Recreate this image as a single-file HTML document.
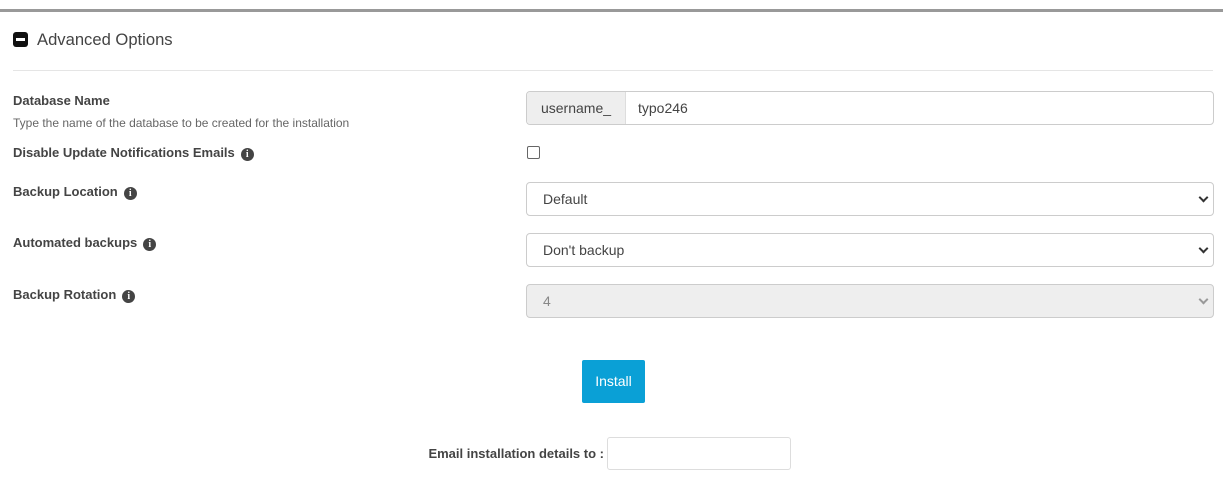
<!DOCTYPE html><html><head><style>
body{margin:0;width:1223px;height:495px;background:#fff;font-family:"Liberation Sans",sans-serif;color:#444;position:relative;overflow:hidden}
.a{position:absolute}
.bar{left:0;top:9px;width:1223px;height:3px;background:#999}
.lbl{font-size:13px;font-weight:bold;color:#444;left:13px}
.i{display:inline-block;width:13px;height:13px;border-radius:50%;background:#444;color:#fff;font-size:10px;font-weight:bold;text-align:center;line-height:13px;font-family:"Liberation Serif",serif;margin-left:6px;vertical-align:0px}
.box{left:526px;width:686px;height:32px;border:1px solid #ccc;border-radius:4px;font-size:14px;line-height:32px;color:#444}
.box span{margin-left:16px}
.chev{position:absolute;right:6px;top:11px;width:5px;height:5px;border-right:2px solid #333;border-bottom:2px solid #333;transform:rotate(45deg)}
</style></head><body>
<div class="a bar"></div>
<div class="a" style="left:13px;top:32px;width:15px;height:15px;background:#111;border-radius:3px"><div style="position:absolute;left:3px;top:6px;width:9px;height:3px;background:#fff"></div></div>
<div class="a" style="left:37px;top:30px;font-size:16.6px;color:#444">Advanced Options</div>
<div class="a" style="left:13px;top:70px;width:1200px;height:1px;background:#e5e5e5"></div>
<div class="a lbl" style="top:93px">Database Name</div>
<div class="a" style="left:13px;top:116px;font-size:12px;color:#666">Type the name of the database to be created for the installation</div>
<div class="a lbl" style="top:145px">Disable Update Notifications Emails<span class="i">i</span></div>
<div class="a lbl" style="top:184px">Backup Location<span class="i">i</span></div>
<div class="a lbl" style="top:235px">Automated backups<span class="i">i</span></div>
<div class="a lbl" style="top:287px">Backup Rotation<span class="i">i</span></div>
<div class="a box" style="top:91px"><div style="position:absolute;left:0;top:0;width:98px;height:32px;background:#eee;border-right:1px solid #ddd;border-radius:4px 0 0 4px;text-align:center">username_</div><span style="position:absolute;left:95px">typo246</span></div>
<div class="a" style="left:527px;top:146px;width:11px;height:11px;border:1px solid #666;border-radius:2px"></div>
<div class="a box" style="top:182px"><span>Default</span><div class="chev"></div></div>
<div class="a box" style="top:233px"><span>Don't backup</span><div class="chev"></div></div>
<div class="a box" style="top:284px;background:#eee;color:#888"><span>4</span><div class="chev" style="border-color:#999"></div></div>
<div class="a" style="left:582px;top:360px;width:63px;height:43px;background:#0aa0d6;border-radius:2px;color:#fff;font-size:14px;line-height:43px;text-align:center">Install</div>
<div class="a" style="left:300px;width:304px;top:446px;text-align:right;font-size:13px;font-weight:bold;color:#444">Email installation details to :</div>
<div class="a" style="left:607px;top:437px;width:182px;height:31px;border:1px solid #ddd;border-radius:3px"></div>
</body></html>
